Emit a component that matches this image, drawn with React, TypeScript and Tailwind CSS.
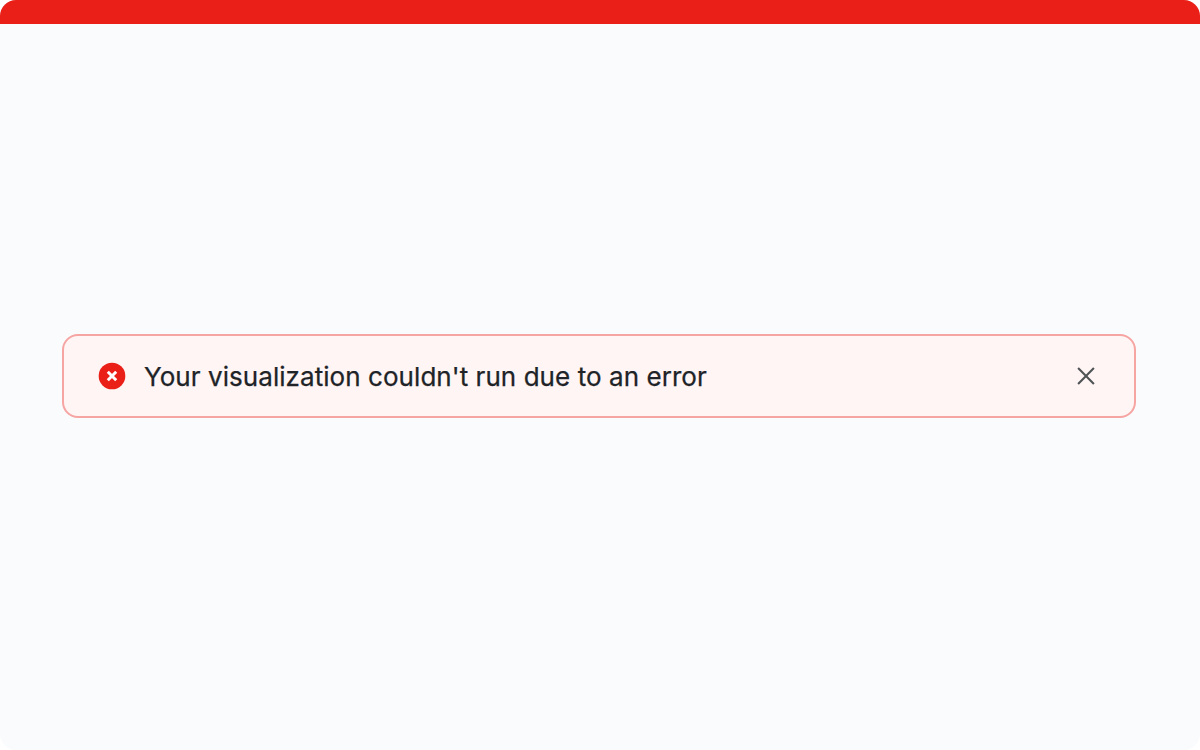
import React, { useState } from 'react';

const ErrorIcon: React.FC = () => (
  <svg className="size-8 shrink-0" viewBox="0 0 32 32" fill="none">
    <circle cx="16" cy="16" r="13.33" fill="#e91f18" />
    <path d="M11.8 11.8l8.4 8.4M20.2 11.8l-8.4 8.4" stroke="#fff" strokeWidth="3" />
  </svg>
);

const CloseIcon: React.FC = () => (
  <svg className="block size-8" viewBox="0 0 32 32" fill="none">
    <path d="M8.1 8.1l15.8 15.8M23.9 8.1L8.1 23.9" stroke="#4f5356" strokeWidth="2.1" />
  </svg>
);

const App: React.FC = () => {
  const [open, setOpen] = useState(true);

  return (
    <div className="flex h-[750px] w-[1200px] flex-col overflow-hidden rounded-2xl bg-[#fafbfd] font-['Inter',sans-serif]">
      <div className="h-6 shrink-0 bg-[#e91f18]" />
      <main className="flex-1 pt-[310px] pr-16 pl-[62px]">
        {open && (
          <div
            role="alert"
            className="flex h-[84px] items-center rounded-2xl border-2 border-[#f6a5a3] bg-[#fff5f4] pr-8 pl-8"
          >
            <ErrorIcon />
            <p className="mt-0.5 ml-4 flex-1 text-[26px] leading-9 font-normal tracking-[0.058px] text-[#202327] [-webkit-text-stroke:0.25px_#202327]">
              Your visualization couldn't run due to an error
            </p>
            <button aria-label="Dismiss" onClick={() => setOpen(false)}>
              <CloseIcon />
            </button>
          </div>
        )}
      </main>
    </div>
  );
};

export default App;
